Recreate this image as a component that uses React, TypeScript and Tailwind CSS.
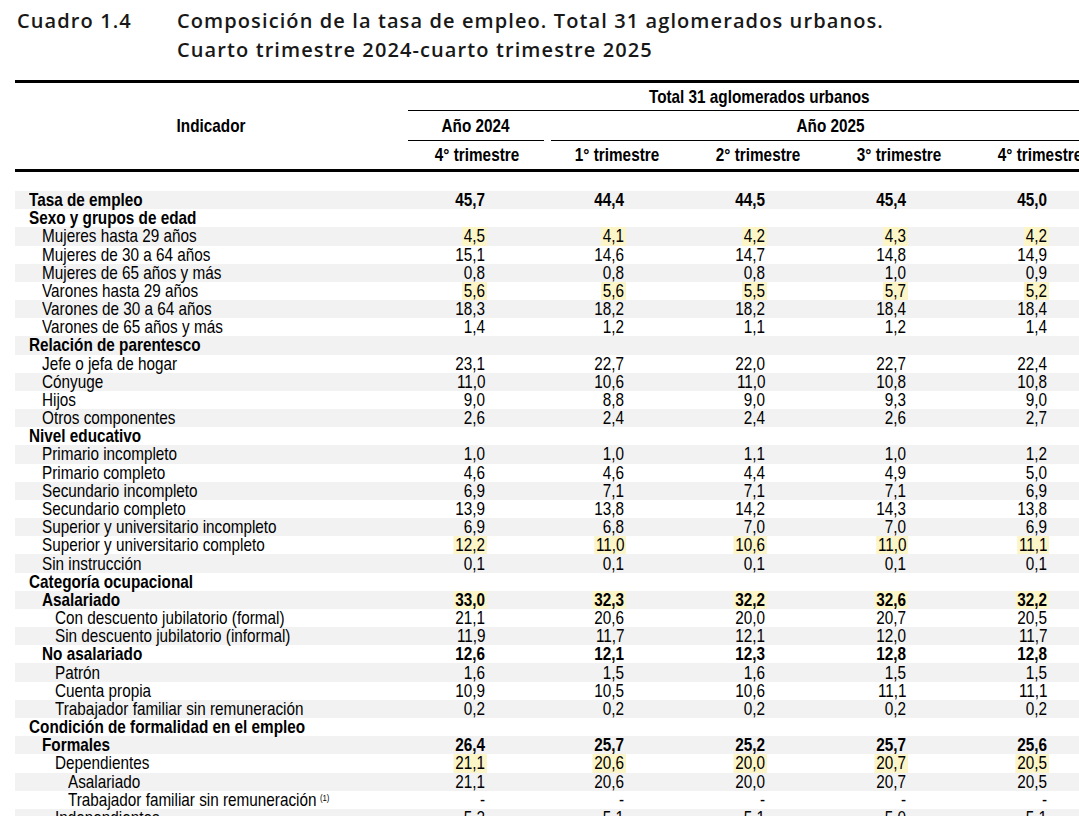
import React from "react";

type Row = {
  label: string;
  level: number;
  bold?: boolean;
  mark?: boolean;
  note?: string;
  values?: string[];
};

const rows: Row[] = [
  { label: "Tasa de empleo", level: 0, bold: true, values: ["45,7", "44,4", "44,5", "45,4", "45,0"] },
  { label: "Sexo y grupos de edad", level: 0, bold: true },
  { label: "Mujeres hasta 29 años", level: 1, mark: true, values: ["4,5", "4,1", "4,2", "4,3", "4,2"] },
  { label: "Mujeres de 30 a 64 años", level: 1, values: ["15,1", "14,6", "14,7", "14,8", "14,9"] },
  { label: "Mujeres de 65 años y más", level: 1, values: ["0,8", "0,8", "0,8", "1,0", "0,9"] },
  { label: "Varones hasta 29 años", level: 1, mark: true, values: ["5,6", "5,6", "5,5", "5,7", "5,2"] },
  { label: "Varones de 30 a 64 años", level: 1, values: ["18,3", "18,2", "18,2", "18,4", "18,4"] },
  { label: "Varones de 65 años y más", level: 1, values: ["1,4", "1,2", "1,1", "1,2", "1,4"] },
  { label: "Relación de parentesco", level: 0, bold: true },
  { label: "Jefe o jefa de hogar", level: 1, values: ["23,1", "22,7", "22,0", "22,7", "22,4"] },
  { label: "Cónyuge", level: 1, values: ["11,0", "10,6", "11,0", "10,8", "10,8"] },
  { label: "Hijos", level: 1, values: ["9,0", "8,8", "9,0", "9,3", "9,0"] },
  { label: "Otros componentes", level: 1, values: ["2,6", "2,4", "2,4", "2,6", "2,7"] },
  { label: "Nivel educativo", level: 0, bold: true },
  { label: "Primario incompleto", level: 1, values: ["1,0", "1,0", "1,1", "1,0", "1,2"] },
  { label: "Primario completo", level: 1, values: ["4,6", "4,6", "4,4", "4,9", "5,0"] },
  { label: "Secundario incompleto", level: 1, values: ["6,9", "7,1", "7,1", "7,1", "6,9"] },
  { label: "Secundario completo", level: 1, values: ["13,9", "13,8", "14,2", "14,3", "13,8"] },
  { label: "Superior y universitario incompleto", level: 1, values: ["6,9", "6,8", "7,0", "7,0", "6,9"] },
  { label: "Superior y universitario completo", level: 1, mark: true, values: ["12,2", "11,0", "10,6", "11,0", "11,1"] },
  { label: "Sin instrucción", level: 1, values: ["0,1", "0,1", "0,1", "0,1", "0,1"] },
  { label: "Categoría ocupacional", level: 0, bold: true },
  { label: "Asalariado", level: 1, bold: true, mark: true, values: ["33,0", "32,3", "32,2", "32,6", "32,2"] },
  { label: "Con descuento jubilatorio (formal)", level: 2, values: ["21,1", "20,6", "20,0", "20,7", "20,5"] },
  { label: "Sin descuento jubilatorio (informal)", level: 2, values: ["11,9", "11,7", "12,1", "12,0", "11,7"] },
  { label: "No asalariado", level: 1, bold: true, values: ["12,6", "12,1", "12,3", "12,8", "12,8"] },
  { label: "Patrón", level: 2, values: ["1,6", "1,5", "1,6", "1,5", "1,5"] },
  { label: "Cuenta propia", level: 2, values: ["10,9", "10,5", "10,6", "11,1", "11,1"] },
  { label: "Trabajador familiar sin remuneración", level: 2, values: ["0,2", "0,2", "0,2", "0,2", "0,2"] },
  { label: "Condición de formalidad en el empleo", level: 0, bold: true },
  { label: "Formales", level: 1, bold: true, values: ["26,4", "25,7", "25,2", "25,7", "25,6"] },
  { label: "Dependientes", level: 2, mark: true, values: ["21,1", "20,6", "20,0", "20,7", "20,5"] },
  { label: "Asalariado", level: 3, values: ["21,1", "20,6", "20,0", "20,7", "20,5"] },
  { label: "Trabajador familiar sin remuneración", level: 3, note: "(1)", values: ["-", "-", "-", "-", "-"] },
  { label: "Independientes", level: 2, values: ["5,2", "5,1", "5,1", "5,0", "5,1"] },
];

const indent = ["pl-[14px]", "pl-[27px]", "pl-[40px]", "pl-[53px]"];
const cols = "grid grid-cols-[393px_139px_141px_141px_141px_141px]";

function DataRow({ row, index }: { row: Row; index: number }) {
  return (
    <div className={`${cols} h-[18.18px] items-center ${index % 2 === 0 ? "bg-[#f2f2f2]" : "bg-white"}`}>
      <div className={`${indent[row.level]} whitespace-nowrap ${row.bold ? "font-bold" : ""}`}>
        <span className="inline-block origin-left scale-x-[0.86]">
          {row.label}
          {row.note ? <sup className="ml-[4px] text-[9px] font-normal">{row.note}</sup> : null}
        </span>
      </div>
      {(row.values ?? ["", "", "", "", ""]).map((value, i) => (
        <div key={i} className={`flex h-full justify-end ${i === 0 ? "pr-[60px]" : "pr-[62px]"}`}>
          <span
            className={`flex h-full origin-right scale-x-[0.86] items-center px-[2px] ${row.mark ? "bg-[#fcf5c7]" : ""} ${row.bold ? "font-bold" : ""}`}
          >
            {value}
          </span>
        </div>
      ))}
    </div>
  );
}

function HeadText({ children }: { children: React.ReactNode }) {
  return <span className="inline-block scale-x-[0.86] whitespace-nowrap">{children}</span>;
}

export default function App() {
  return (
    <div className="h-[816px] w-[1079px] overflow-hidden bg-white text-black">
      <header className="flex pl-[17px] pt-[6px] font-['Open_Sans',sans-serif] text-[20px] font-semibold leading-[29px] tracking-[1.1px] text-[#181818]">
        <div className="w-[160px] shrink-0">Cuadro 1.4</div>
        <div>
          <p>Composición de la tasa de empleo. Total 31 aglomerados urbanos.</p>
          <p>Cuarto trimestre 2024-cuarto trimestre 2025</p>
        </div>
      </header>

      <div className="ml-[15px] mt-[16px] w-[1096px] font-['Liberation_Sans',Arial,sans-serif] text-[17.8px] leading-[18px]">
        <div className="border-y-[3px] border-black">
          <div className={`${cols} grid-rows-[28px_30px_28px] font-bold`}>
            <div className="row-span-3 flex items-center justify-center">
              <HeadText>Indicador</HeadText>
            </div>
            <div className="col-span-5 flex items-center justify-center border-b border-black">
              <HeadText>Total 31 aglomerados urbanos</HeadText>
            </div>
            <div className="mr-[3px] flex items-center justify-center border-b border-black">
              <HeadText>Año 2024</HeadText>
            </div>
            <div className="col-span-4 ml-[4px] flex items-center justify-center border-b border-black">
              <HeadText>Año 2025</HeadText>
            </div>
            {["4° trimestre", "1° trimestre", "2° trimestre", "3° trimestre", "4° trimestre"].map((q, i) => (
              <div key={i} className="flex items-center justify-center">
                <HeadText>{q}</HeadText>
              </div>
            ))}
          </div>
        </div>

        <div className="mt-[19px]">
          {rows.map((row, i) => (
            <DataRow key={i} row={row} index={i} />
          ))}
        </div>
      </div>
    </div>
  );
}
